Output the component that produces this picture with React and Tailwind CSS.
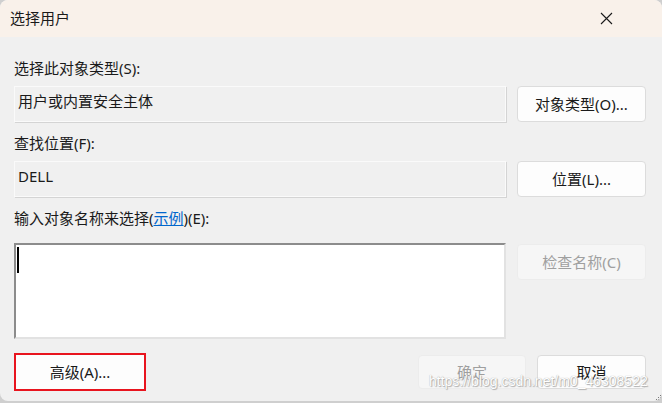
import React from 'react';

const font = { fontFamily: '"Noto Sans", "Noto Sans CJK SC", sans-serif' };

function Btn({ children, disabled = false, className = '' }) {
  return (
    <button
      className={
        'flex items-center justify-center rounded-[4px] border text-[15px] ' +
        (disabled
          ? 'bg-[#f6f6f6] border-[#ececec] text-[#9f9f9f] '
          : 'bg-[#fdfdfd] border-[#dcdcdc] text-[#1a1a1a] ') +
        className
      }
    >
      {children}
    </button>
  );
}

function ReadField({ children }) {
  return (
    <div className="h-[36px] border border-[#fafafa] bg-[#f0f0f0] px-[3px] pt-[4px] text-[15px] leading-[20px] text-[#1a1a1a] shadow-[1px_1px_0_#d4d4d4]">
      {children}
    </div>
  );
}

export default function App() {
  return (
    <div className="w-[662px] h-[403px] bg-[#cfcfcf]" style={font}>
      <div className="relative flex h-[401px] flex-col overflow-hidden rounded-lg bg-[#f0f0f0]">
        {/* title bar */}
        <div className="flex h-[37px] items-center justify-between bg-[#f9f1ea] pl-[10px] pr-[49px]">
          <span className="text-[15px] text-[#1a1a1a]">选择用户</span>
          <svg width="13" height="13" viewBox="0 0 13 13">
            <path d="M1 1L12 12M12 1L1 12" stroke="#1a1a1a" strokeWidth="1.1" />
          </svg>
        </div>

        <div className="flex flex-1 flex-col pl-[14px] pr-[16px] pt-[21px]">
          <div className="text-[15px] leading-[20px] text-[#1a1a1a]">选择此对象类型(S):</div>
          <div className="mt-[8px] grid grid-cols-[492px_1fr] gap-[11px]">
            <ReadField>用户或内置安全主体</ReadField>
            <Btn className="h-[36px]">对象类型(O)...</Btn>
          </div>

          <div className="mt-[11px] text-[15px] leading-[20px] text-[#1a1a1a]">查找位置(F):</div>
          <div className="mt-[8px] grid grid-cols-[492px_1fr] gap-[11px]">
            <ReadField>DELL</ReadField>
            <Btn className="h-[36px]">位置(L)...</Btn>
          </div>

          <div className="mt-[11px] text-[15px] leading-[20px] text-[#1a1a1a]">
            输入对象名称来选择(<span className="text-[#0066cc] underline">示例</span>)(E):
          </div>
          <div className="mt-[15px] grid grid-cols-[492px_1fr] items-start gap-[11px]">
            <div className="h-[96px] border-2 border-t-[#8c8c8c] border-l-[#8c8c8c] border-r-[#e2e2e2] border-b-[#e2e2e2] bg-white pl-[1px] pt-[2px]">
              <div className="h-[26px] w-[2px] bg-black" />
            </div>
            <Btn disabled className="mt-[1px] h-[36px]">检查名称(C)</Btn>
          </div>

          <div className="mt-[14px] flex items-center">
            <button className="flex h-[38px] w-[132px] items-center justify-center border-2 border-[#e8141e] bg-[#fdfdfd] text-[15px] text-[#1a1a1a]">
              高级(A)...
            </button>
            <div className="flex-1" />
            <Btn disabled className="h-[34px] w-[108px]">确定</Btn>
            <Btn className="ml-[11px] h-[34px] w-[109px]">取消</Btn>
          </div>
        </div>

        {/* watermark overlay */}
        <div
          className="absolute left-[429px] top-[372px] text-[14px] leading-[18px] text-white"
          style={{ fontFamily: '"Liberation Sans", Arial, sans-serif', textShadow: '0 0 1px #9a9a9a, 1px 1px 1px #b0b0b0' }}
        >
          https://blog.csdn.net/m0_46308522
        </div>
        {/* resize grip */}
        <svg className="absolute bottom-0 right-0" width="8" height="8" viewBox="0 0 8 8">
          <rect x="6" y="2" width="1" height="1" fill="#7a7a7a" />
          <rect x="4" y="4" width="1" height="1" fill="#7a7a7a" />
          <rect x="6" y="4" width="1" height="1" fill="#7a7a7a" />
          <rect x="2" y="6" width="1" height="1" fill="#7a7a7a" />
          <rect x="4" y="6" width="1" height="1" fill="#7a7a7a" />
          <rect x="6" y="6" width="1" height="1" fill="#7a7a7a" />
        </svg>
      </div>
    </div>
  );
}
